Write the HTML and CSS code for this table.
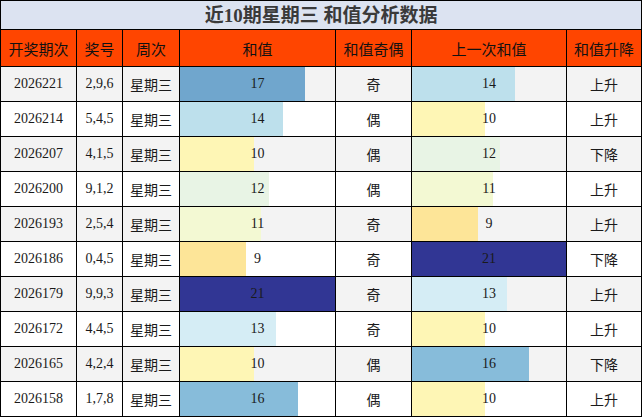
FILE: index.html
```html
<!DOCTYPE html>
<html lang="zh-CN">
<head>
<meta charset="utf-8">
<title>近10期星期三 和值分析数据</title>
<link rel="stylesheet" href="styles.css">
</head>
<body>
<table class="grid">
  <colgroup>
    <col class="c1"><col class="c2"><col class="c3"><col class="c4"><col class="c5"><col class="c6"><col class="c7">
  </colgroup>
  <thead>
    <tr class="title-row"><th colspan="7" class="title">近10期星期三 和值分析数据</th></tr>
    <tr class="head-row">
      <th>开奖期次</th><th>奖号</th><th>周次</th><th>和值</th><th>和值奇偶</th><th>上一次和值</th><th>和值升降</th>
    </tr>
  </thead>
  <tbody>
    <tr class="odd"><td>2026221</td><td>2,9,6</td><td>星期三</td><td class="bar" style="--p:80.95%;--c:#70a6cd">17</td><td>奇</td><td class="bar" style="--p:66.67%;--c:#bde0ec">14</td><td>上升</td></tr>
    <tr><td>2026214</td><td>5,4,5</td><td>星期三</td><td class="bar" style="--p:66.67%;--c:#bde0ec">14</td><td>偶</td><td class="bar" style="--p:47.62%;--c:#fef6b5">10</td><td>上升</td></tr>
    <tr class="odd"><td>2026207</td><td>4,1,5</td><td>星期三</td><td class="bar" style="--p:47.62%;--c:#fef6b5">10</td><td>偶</td><td class="bar" style="--p:57.14%;--c:#e8f4e5">12</td><td>下降</td></tr>
    <tr><td>2026200</td><td>9,1,2</td><td>星期三</td><td class="bar" style="--p:57.14%;--c:#e8f4e5">12</td><td>偶</td><td class="bar" style="--p:52.38%;--c:#f3f9d3">11</td><td>上升</td></tr>
    <tr class="odd"><td>2026193</td><td>2,5,4</td><td>星期三</td><td class="bar" style="--p:52.38%;--c:#f3f9d3">11</td><td>奇</td><td class="bar" style="--p:42.86%;--c:#fde598">9</td><td>上升</td></tr>
    <tr><td>2026186</td><td>0,4,5</td><td>星期三</td><td class="bar" style="--p:42.86%;--c:#fde598">9</td><td>奇</td><td class="bar" style="--p:100%;--c:#313694">21</td><td>下降</td></tr>
    <tr class="odd"><td>2026179</td><td>9,9,3</td><td>星期三</td><td class="bar" style="--p:100%;--c:#313694">21</td><td>奇</td><td class="bar" style="--p:61.9%;--c:#d5edf5">13</td><td>上升</td></tr>
    <tr><td>2026172</td><td>4,4,5</td><td>星期三</td><td class="bar" style="--p:61.9%;--c:#d5edf5">13</td><td>奇</td><td class="bar" style="--p:47.62%;--c:#fef6b5">10</td><td>上升</td></tr>
    <tr class="odd"><td>2026165</td><td>4,2,4</td><td>星期三</td><td class="bar" style="--p:47.62%;--c:#fef6b5">10</td><td>偶</td><td class="bar" style="--p:76.19%;--c:#87bcda">16</td><td>下降</td></tr>
    <tr><td>2026158</td><td>1,7,8</td><td>星期三</td><td class="bar" style="--p:76.19%;--c:#87bcda">16</td><td>偶</td><td class="bar" style="--p:47.62%;--c:#fef6b5">10</td><td>上升</td></tr>
  </tbody>
</table>
</body>
</html>
```
FILE: styles.css
```css
html, body {
  margin: 0;
  padding: 0;
  background: #ffffff;
}

body {
  font-family: "Liberation Serif", "Noto Sans CJK SC", serif;
  color: #1a1a1a;
}

.grid {
  border-collapse: collapse;
  table-layout: fixed;
  width: 641px;
}

.c1 { width: 76px; }
.c2 { width: 46px; }
.c3 { width: 57px; }
.c4 { width: 156px; }
.c5 { width: 76px; }
.c6 { width: 155px; }
.c7 { width: 75px; }

.grid th,
.grid td {
  border: 1px solid #000;
  padding: 0;
  text-align: center;
  vertical-align: middle;
}

.title-row { height: 29px; }

.title {
  background: #dce3f1;
  color: #3a3a3a;
  font-size: 19px;
  font-weight: bold;
  font-family: "Liberation Serif", "Noto Sans CJK SC", sans-serif;
  line-height: 1;
}

.head-row { height: 37px; }

.head-row th {
  background: #ff4500;
  color: #111;
  font-weight: normal;
  font-size: 15px;
  font-family: "Noto Sans CJK SC", sans-serif;
}

tbody tr { height: 35px; }

tbody td {
  font-size: 14px;
  background-color: #ffffff;
}

tbody tr.odd td {
  background-color: #f3f3f3;
}

tbody td.bar {
  background-image: linear-gradient(to right, var(--c) var(--p), transparent var(--p));
  background-repeat: no-repeat;
}
```
